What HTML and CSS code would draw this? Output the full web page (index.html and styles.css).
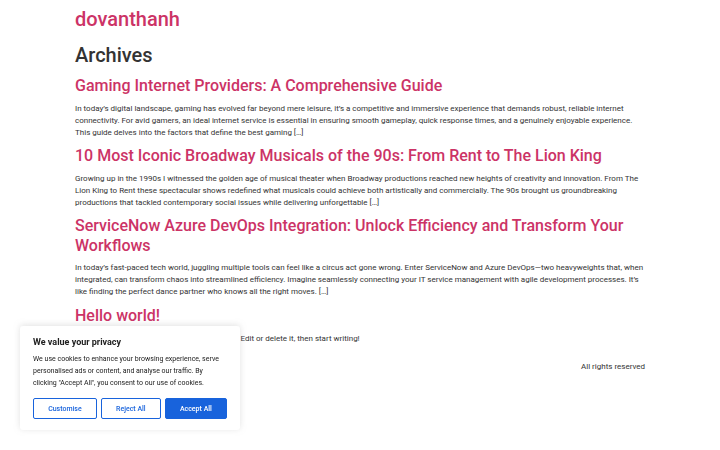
FILE: index.html
```html
<!DOCTYPE html>
<html lang="en">
<head>
<meta charset="utf-8">
<title>Archives - dovanthanh</title>
<link rel="stylesheet" href="styles.css">
</head>
<body>
<div class="page">
  <header class="site-header">
    <a class="site-title" href="#">dovanthanh</a>
  </header>
  <main class="site-main">
    <h1 class="page-title">Archives</h1>
    <article class="post">
      <h2 class="entry-title"><a href="#">Gaming Internet Providers: A Comprehensive Guide</a></h2>
      <p>In today’s digital landscape, gaming has evolved far beyond mere leisure, it’s a competitive and immersive experience that demands robust, reliable internet connectivity. For avid gamers, an ideal internet service is essential in ensuring smooth gameplay, quick response times, and a genuinely enjoyable experience. This guide delves into the factors that define the best gaming […]</p>
    </article>
    <article class="post">
      <h2 class="entry-title"><a href="#">10 Most Iconic Broadway Musicals of the 90s: From Rent to The Lion King</a></h2>
      <p>Growing up in the 1990s I witnessed the golden age of musical theater when Broadway productions reached new heights of creativity and innovation. From The Lion King to Rent these spectacular shows redefined what musicals could achieve both artistically and commercially. The 90s brought us groundbreaking productions that tackled contemporary social issues while delivering unforgettable […]</p>
    </article>
    <article class="post">
      <h2 class="entry-title"><a href="#">ServiceNow Azure DevOps Integration: Unlock Efficiency and Transform Your Workflows</a></h2>
      <p>In today’s fast-paced tech world, juggling multiple tools can feel like a circus act gone wrong. Enter ServiceNow and Azure DevOps—two heavyweights that, when integrated, can transform chaos into streamlined efficiency. Imagine seamlessly connecting your IT service management with agile development processes. It’s like finding the perfect dance partner who knows all the right moves. […]</p>
    </article>
    <article class="post">
      <h2 class="entry-title"><a href="#">Hello world!</a></h2>
      <p>Welcome to WordPress. This is your first post. Edit or delete it, then start writing!</p>
    </article>
  </main>
  <footer class="site-footer">
    <p class="copyright">All rights reserved</p>
  </footer>
</div>

<div class="cookie-banner">
  <p class="cookie-title">We value your privacy</p>
  <p class="cookie-text">We use cookies to enhance your browsing experience, serve personalised ads or content, and analyse our traffic. By clicking "Accept All", you consent to our use of cookies.</p>
  <div class="cookie-actions">
    <button class="cky-btn cky-outline">Customise</button>
    <button class="cky-btn cky-outline">Reject All</button>
    <button class="cky-btn cky-accept">Accept All</button>
  </div>
</div>
</body>
</html>
```

FILE: styles.css
```css
html, body {
  margin: 0;
  padding: 0;
  background: #fff;
}
body {
  font-family: Roboto, "Liberation Sans", Arial, sans-serif;
  color: #333;
  font-size: 8px;
  line-height: 1.5;
}
a {
  color: #c36;
  text-decoration: none;
}
.page {
  max-width: 570px;
  margin: 0 auto;
  padding-top: 7px;
}
.site-title {
  display: block;
  font-size: 20px;
  line-height: 24px;
  font-weight: 500;
}
.page-title {
  margin: 12px 0 9px;
  font-size: 20px;
  line-height: 24px;
  font-weight: 500;
  color: #333;
}
.post {
  margin: 0;
}
.entry-title {
  margin: 0 0 7.5px;
  font-size: 16px;
  line-height: 19.2px;
  font-weight: 500;
}
.post p {
  margin: 0 0 7.5px;
}
.site-footer {
  display: flex;
  justify-content: flex-end;
  padding-top: 9px;
}
.copyright {
  margin: 0;
  font-size: 8px;
  line-height: 12px;
}

.cookie-banner {
  position: fixed;
  left: 20px;
  bottom: 20px;
  width: 220px;
  box-sizing: border-box;
  padding: 10px 13px 11px;
  background: #fff;
  border-radius: 3px;
  box-shadow: 0 -1px 6px 0 rgba(172, 171, 171, 0.35);
  color: #212121;
}
.cookie-title {
  margin: 0 0 5px;
  font-size: 9px;
  line-height: 12px;
  font-weight: 700;
}
.cookie-text {
  margin: 0 0 9px;
  font-size: 7px;
  line-height: 12px;
}
.cookie-actions {
  display: flex;
  gap: 4px;
}
.cky-btn {
  flex: auto;
  box-sizing: border-box;
  height: 21px;
  padding: 0 10px;
  font-family: Roboto, "Liberation Sans", Arial, sans-serif;
  font-size: 7px;
  font-weight: 500;
  border-radius: 2px;
  border: 1.5px solid #1863dc;
  cursor: pointer;
}
.cky-outline {
  background: #fff;
  color: #1863dc;
}
.cky-accept {
  background: #1863dc;
  color: #fff;
}
```
